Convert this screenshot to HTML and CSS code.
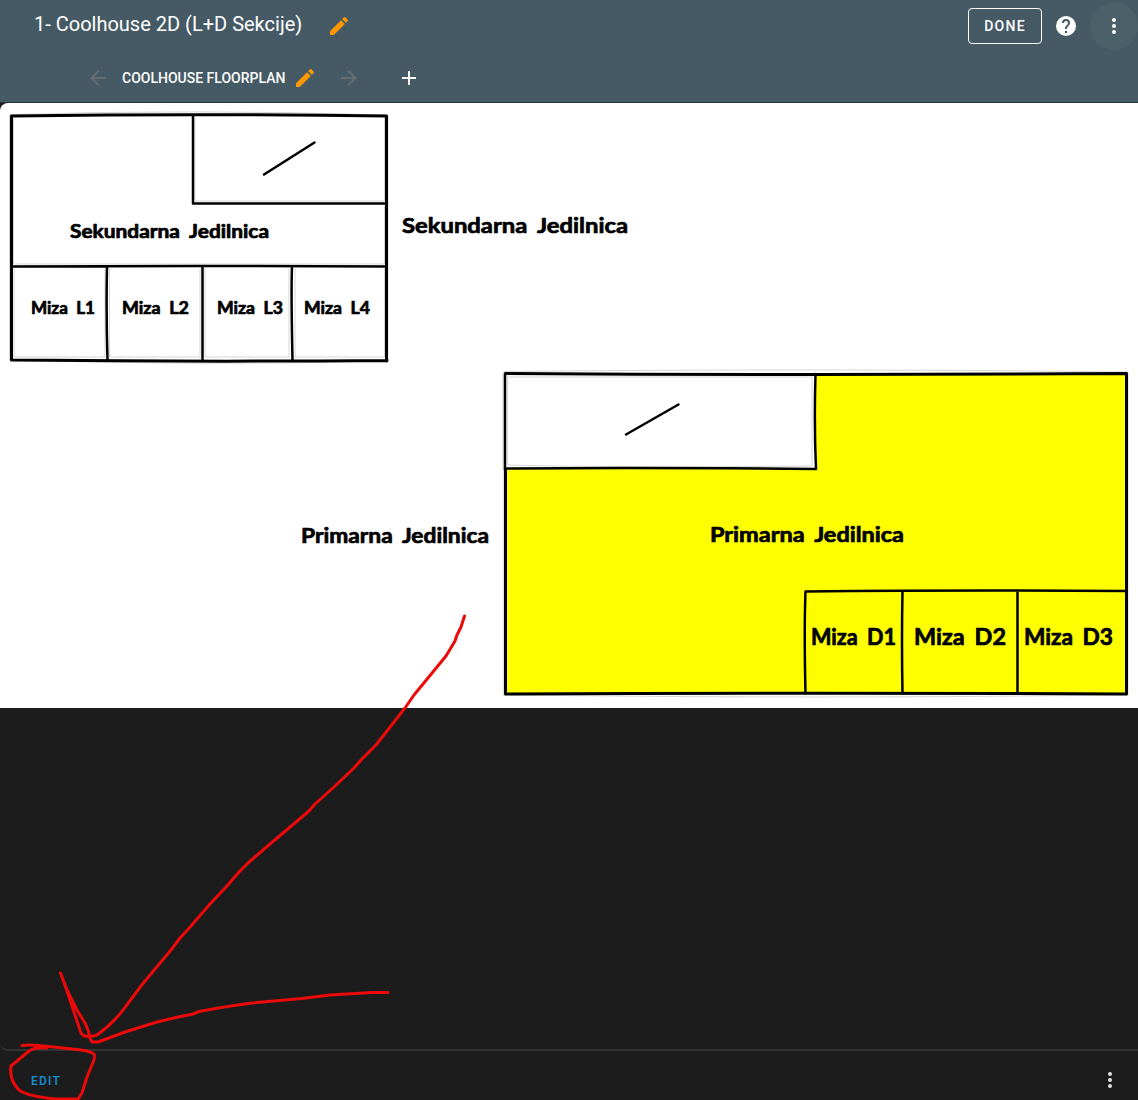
FILE: index.html
```html
<!DOCTYPE html>
<html lang="en">
<head>
<meta charset="utf-8">
<title>Coolhouse Floorplan</title>
<link rel="stylesheet" href="styles.css">
</head>
<body>
<div class="app">
  <header class="header">
    <div class="toolbar">
      <h1 class="title">1- Coolhouse 2D (L+D Sekcije)</h1>
      <svg class="icon pencil" viewBox="0 0 24 24"><path d="M3 17.25V21h3.75L17.81 9.94l-3.75-3.75L3 17.25zM20.71 7.04a1 1 0 0 0 0-1.41l-2.34-2.34a1 1 0 0 0-1.41 0l-1.83 1.83 3.75 3.75 1.83-1.83z"/></svg>
      <div class="actions">
        <button class="done">DONE</button>
        <svg class="icon help" viewBox="0 0 24 24"><path d="M15.07 11.25l-.9.92C13.45 12.89 13 13.5 13 15h-2v-.5c0-1.11.45-2.11 1.17-2.83l1.24-1.26c.37-.36.59-.86.59-1.41a2 2 0 0 0-4 0H8a4 4 0 0 1 8 0c0 .88-.36 1.67-.93 2.25M13 19h-2v-2h2M12 2a10 10 0 1 0 0 20 10 10 0 0 0 0-20z"/></svg>
        <span class="menu-button"><svg class="icon" viewBox="0 0 24 24"><path d="M12 16a2 2 0 1 1 0 4 2 2 0 0 1 0-4m0-6a2 2 0 1 1 0 4 2 2 0 0 1 0-4m0-6a2 2 0 1 1 0 4 2 2 0 0 1 0-4z"/></svg></span>
      </div>
    </div>
    <nav class="tabs">
      <svg class="icon arrow" viewBox="0 0 24 24"><path d="M20 11v2H8l5.500 5.500-1.420 1.420L4.160 12l7.920-7.920L13.500 5.500 8 11h12z"/></svg>
      <span class="tab">COOLHOUSE FLOORPLAN</span>
      <svg class="icon pencil" viewBox="0 0 24 24"><path d="M3 17.25V21h3.75L17.81 9.94l-3.75-3.75L3 17.25zM20.71 7.04a1 1 0 0 0 0-1.41l-2.34-2.34a1 1 0 0 0-1.41 0l-1.83 1.83 3.75 3.75 1.83-1.83z"/></svg>
      <svg class="icon arrow next" viewBox="0 0 24 24"><path d="M4 11v2h12l-5.500 5.500 1.420 1.420L19.840 12l-7.920-7.920L10.500 5.500 16 11H4z"/></svg>
      <svg class="icon plus" viewBox="0 0 24 24"><path d="M19 13h-6v6h-2v-6H5v-2h6V5h2v6h6v2z"/></svg>
    </nav>
  </header>

  <main class="card">
    <svg class="plan" viewBox="0 103 1138 605">
      <g class="ghost">
        <path d="M10 114.500Q200 109 388 115M9.500 115V360Q200 366 388 361V115M13.500 118V264H384.500V206M195 118V201H384.500V118M14 269V357H105V269M109.500 269V357H200V269M205 269V357H289V269M295 269V357H384.500V269"/>
        <path d="M503.500 371.500Q820 368 1128 372V695Q820 699 503.500 695zM508 377H812V466Q620 468 508 465z"/>
      </g>
      <path class="active" d="M816 375H1126V693H506V469H816z"/>
      <path class="wall" d="M12 116Q200 113.500 386 116M11.500 116V360M12 360Q200 362 387 360.500M386.500 116V361"/>
      <path class="wall thin" d="M193 116V203.500H386M12 266.500Q200 265.500 386 266.500M107 267Q106 310 107.500 360M202.500 267V360M292 267Q291 290 292.500 360"/>
      <path class="wall thin" d="M264 174.500L314.500 142.500M626 434.500L678.500 404.500"/>
      <path class="wall" d="M505.500 373.500Q820 375.500 1126.500 373.500M505.500 470V694Q820 692.500 1126.500 694M1126.500 374V694"/>
      <path class="wall thin" d="M505 374V470M505 468.500Q650 467.500 816 469M815.500 374Q814 425 816 469M805.500 693Q804 630 805.500 591.500Q960 590 1126 591M902.500 591Q901.500 640 902.500 693M1017.500 591V693"/>
      <g class="room">
        <text x="70" y="238" font-size="18" textLength="199" lengthAdjust="spacingAndGlyphs">Sekundarna Jedilnica</text>
        <text x="402" y="233" font-size="21" textLength="226" lengthAdjust="spacingAndGlyphs">Sekundarna Jedilnica</text>
        <text x="31" y="314" font-size="16.500" textLength="64" lengthAdjust="spacingAndGlyphs">Miza L1</text>
        <text x="122" y="314" font-size="16.500" textLength="67" lengthAdjust="spacingAndGlyphs">Miza L2</text>
        <text x="217" y="314" font-size="16.500" textLength="66" lengthAdjust="spacingAndGlyphs">Miza L3</text>
        <text x="304" y="314" font-size="16.500" textLength="66" lengthAdjust="spacingAndGlyphs">Miza L4</text>
        <text x="301" y="542.500" font-size="21" textLength="188" lengthAdjust="spacingAndGlyphs">Primarna Jedilnica</text>
        <text x="710" y="541.500" font-size="21" textLength="194" lengthAdjust="spacingAndGlyphs">Primarna Jedilnica</text>
        <text x="811" y="644.500" font-size="22" textLength="85" lengthAdjust="spacingAndGlyphs">Miza D1</text>
        <text x="914" y="644.500" font-size="22" textLength="92" lengthAdjust="spacingAndGlyphs">Miza D2</text>
        <text x="1024" y="644.500" font-size="22" textLength="89" lengthAdjust="spacingAndGlyphs">Miza D3</text>
      </g>
    </svg>
  </main>

  <section class="backdrop"></section>

  <footer class="footer">
    <span class="edit">EDIT</span>
    <svg class="icon dots" viewBox="0 0 24 24"><path d="M12 16a2 2 0 1 1 0 4 2 2 0 0 1 0-4m0-6a2 2 0 1 1 0 4 2 2 0 0 1 0-4m0-6a2 2 0 1 1 0 4 2 2 0 0 1 0-4z"/></svg>
  </footer>

  <svg class="ink" viewBox="0 0 1138 1100">
    <path d="M464.500 616L461 627L457 635L455 641L446 656L414 695L405 708L376 745L362 759L354 768L335 786L314 805L309 811L270 844L248 863L240 871L226 887L210 904L191 926L180 938L171 950L155 969L141 986L126 1006Q114 1023 97 1035Q92 1037 84 1036L81 1033L74 1012L66 988L60.500 973L67 990L77 1010L85 1023Q89 1031 90 1038L92 1042H98L125 1032L157 1022L178 1017L193 1014L199 1011.500Q228 1006 252 1003L302 998.500L330 995L372 992.500H388"/>
    <path d="M47 1048Q35 1047 29 1051L11 1066Q9 1079 18 1089Q25 1096 55 1099H78L82 1093L87 1077L94 1060Q95 1055 94 1054Q88 1050 72 1049L49 1046.500Q30 1044 22 1045.500"/>
  </svg>
</div>
</body>
</html>
```
FILE: styles.css
```css
* { box-sizing: border-box; }
body { margin: 0; background: #1c1c1c; font-family: Roboto, sans-serif; }
.app { position: relative; display: flex; flex-direction: column; width: 1138px; height: 1100px; overflow: hidden; }
.icon { display: block; flex: none; width: 24px; height: 24px; fill: currentColor; }

.header { flex: none; height: 103px; background: #455a64; border-bottom: 1px solid #2b3135; color: #fff; }
.toolbar { display: flex; align-items: center; height: 52px; padding-left: 34px; }
.title { margin: 0 25px 0 0; padding-bottom: 4px; width: 268px; font-size: 20px; font-weight: 400; line-height: 24px; white-space: nowrap; }
.pencil { color: #ff9800; }
.actions { display: flex; align-items: center; margin-left: auto; }
.done { width: 74px; height: 36px; padding: 0; border: 1px solid #fff; border-radius: 4px; background: none; color: #fff; font: 500 14px Roboto, sans-serif; letter-spacing: 1.25px; }
.help { margin: 0 12px; }
.menu-button { display: flex; align-items: center; justify-content: center; width: 48px; height: 48px; border-radius: 50%; background: #4c6069; }

.tabs { display: flex; align-items: center; height: 50px; padding: 2px 0 0 86px; }
.arrow { color: #666d70; }
.tab { width: 163px; margin: 0 8px 0 12px; font-size: 14px; font-weight: 500; line-height: 20px; white-space: nowrap; }
.next { margin-left: 20px; }
.plus { margin-left: 36px; }

.card { flex: none; height: 605px; overflow: hidden; background: #fff; border-top-left-radius: 8px; }
.plan { display: block; width: 1138px; height: 605px; }
.plan path { fill: none; stroke: #000; stroke-width: 3; stroke-linecap: round; stroke-linejoin: round; }
.plan .thin { stroke-width: 2.5; }
.plan .ghost path { stroke: #d7d7d7; stroke-width: 1; }
.plan .active { fill: #ff0; stroke: none; }
.room { font-family: Lato, sans-serif; font-weight: 700; fill: #000; stroke: #000; stroke-width: .7; stroke-linejoin: round; word-spacing: 4px; }

.backdrop { flex: 1; border-bottom: 2px solid #333; border-bottom-left-radius: 8px; }
.footer { flex: none; display: flex; align-items: center; justify-content: space-between; height: 49px; padding: 10px 16px 0 31px; }
.edit { color: #1590d6; font-size: 12px; font-weight: 500; letter-spacing: 1.2px; }
.dots { margin-top: -2px; color: #e1e1e1; }

.ink { position: absolute; inset: 0; width: 1138px; height: 1100px; pointer-events: none; }
.ink path { fill: none; stroke: #ec0909; stroke-width: 3; stroke-linecap: round; stroke-linejoin: round; }
```
